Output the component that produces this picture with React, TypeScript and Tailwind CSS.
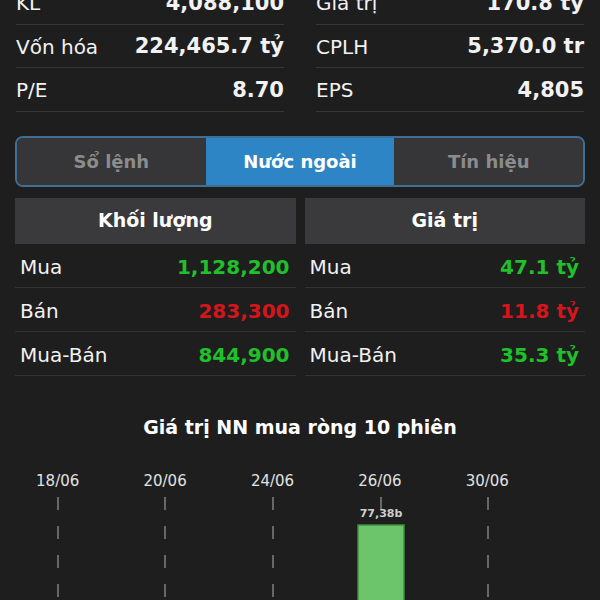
import React from "react";

const stats = [
  [
    { label: "KL", value: "4,088,100" },
    { label: "Vốn hóa", value: "224,465.7 tỷ" },
    { label: "P/E", value: "8.70" },
  ],
  [
    { label: "Giá trị", value: "170.8 tỷ" },
    { label: "CPLH", value: "5,370.0 tr" },
    { label: "EPS", value: "4,805" },
  ],
];

const tables = [
  {
    title: "Khối lượng",
    rows: [
      { label: "Mua", value: "1,128,200", color: "text-[#20c02b]" },
      { label: "Bán", value: "283,300", color: "text-[#d3161c]" },
      { label: "Mua-Bán", value: "844,900", color: "text-[#20c02b]" },
    ],
  },
  {
    title: "Giá trị",
    rows: [
      { label: "Mua", value: "47.1 tỷ", color: "text-[#20c02b]" },
      { label: "Bán", value: "11.8 tỷ", color: "text-[#d3161c]" },
      { label: "Mua-Bán", value: "35.3 tỷ", color: "text-[#20c02b]" },
    ],
  },
];

const tabs = ["Sổ lệnh", "Nước ngoài", "Tín hiệu"];
const dates = ["18/06", "20/06", "24/06", "26/06", "30/06"];
const lineX = [58, 165, 273, 381, 488];

const App = () => {
  return (
    <div className="w-[600px] h-[600px] overflow-hidden bg-[#1e1e1f] text-[#f2f2f2] font-['DejaVu_Sans','Liberation_Sans',sans-serif]">
      {/* stats */}
      <div className="-mt-[19px] px-4 grid grid-cols-2 gap-x-8">
        {stats.map((col, i) => (
          <div key={i} className="flex flex-col">
            {col.map((s) => (
              <div
                key={s.label}
                className="flex justify-between items-center h-[43.5px] pt-[2px] border-b border-[#363638]"
              >
                <span className="text-[20px]">{s.label}</span>
                <span className="text-[21px] font-bold">{s.value}</span>
              </div>
            ))}
          </div>
        ))}
      </div>

      {/* tabs */}
      <div className="mx-[15px] mt-6 h-[51px] flex rounded-lg border-2 border-[#3f6f96] overflow-hidden">
        {tabs.map((t, i) => (
          <div
            key={t}
            className={
              i === 1
                ? "flex-1 flex items-center justify-center bg-[#2e85c5] text-white text-[18px] font-bold"
                : "flex-1 flex items-center justify-center bg-[#363638] text-[#8c8c8c] text-[18px] font-bold"
            }
          >
            {t}
          </div>
        ))}
      </div>

      {/* foreign tables */}
      <div className="mt-[11px] px-[15px] grid grid-cols-2 gap-[9px]">
        {tables.map((tb) => (
          <div key={tb.title} className="flex flex-col">
            <div className="h-[46px] bg-[#3a3a3c] flex items-center justify-center text-[19px] font-bold text-white">
              {tb.title}
            </div>
            {tb.rows.map((r) => (
              <div
                key={r.label}
                className="h-[44px] flex items-center justify-between pl-[5px] pr-[6px] pt-[3px] border-b border-[#333335]"
              >
                <span className="text-[20px]">{r.label}</span>
                <span className={`text-[20px] font-bold ${r.color}`}>{r.value}</span>
              </div>
            ))}
          </div>
        ))}
      </div>

      {/* chart */}
      <div className="mt-[39px] text-center text-[19px] font-bold text-white leading-6">
        Giá trị NN mua ròng 10 phiên
      </div>
      <div className="mt-[33px] grid grid-cols-5 w-[537px] ml-[4px] text-[15px] text-[#e2e2e2] leading-[18px]">
        {dates.map((d) => (
          <div key={d} className="text-center">
            {d}
          </div>
        ))}
      </div>
      <svg width="600" height="120" className="block">
        {lineX.map((x) => (
          <line
            key={x}
            x1={x}
            x2={x}
            y1={7}
            y2={120}
            stroke="#808080"
            strokeWidth="1.5"
            strokeDasharray="13 16"
          />
        ))}
        <rect x="358" y="35" width="46" height="100" fill="#6cc46b" stroke="#3f8f3f" strokeWidth="1.5" />
        <text
          x="381"
          y="27"
          textAnchor="middle"
          fontSize="11"
          fontWeight="700"
          fill="#cfcfcf"
          fontFamily="DejaVu Sans, sans-serif"
        >
          77,38b
        </text>
      </svg>
    </div>
  );
};

export default App;
